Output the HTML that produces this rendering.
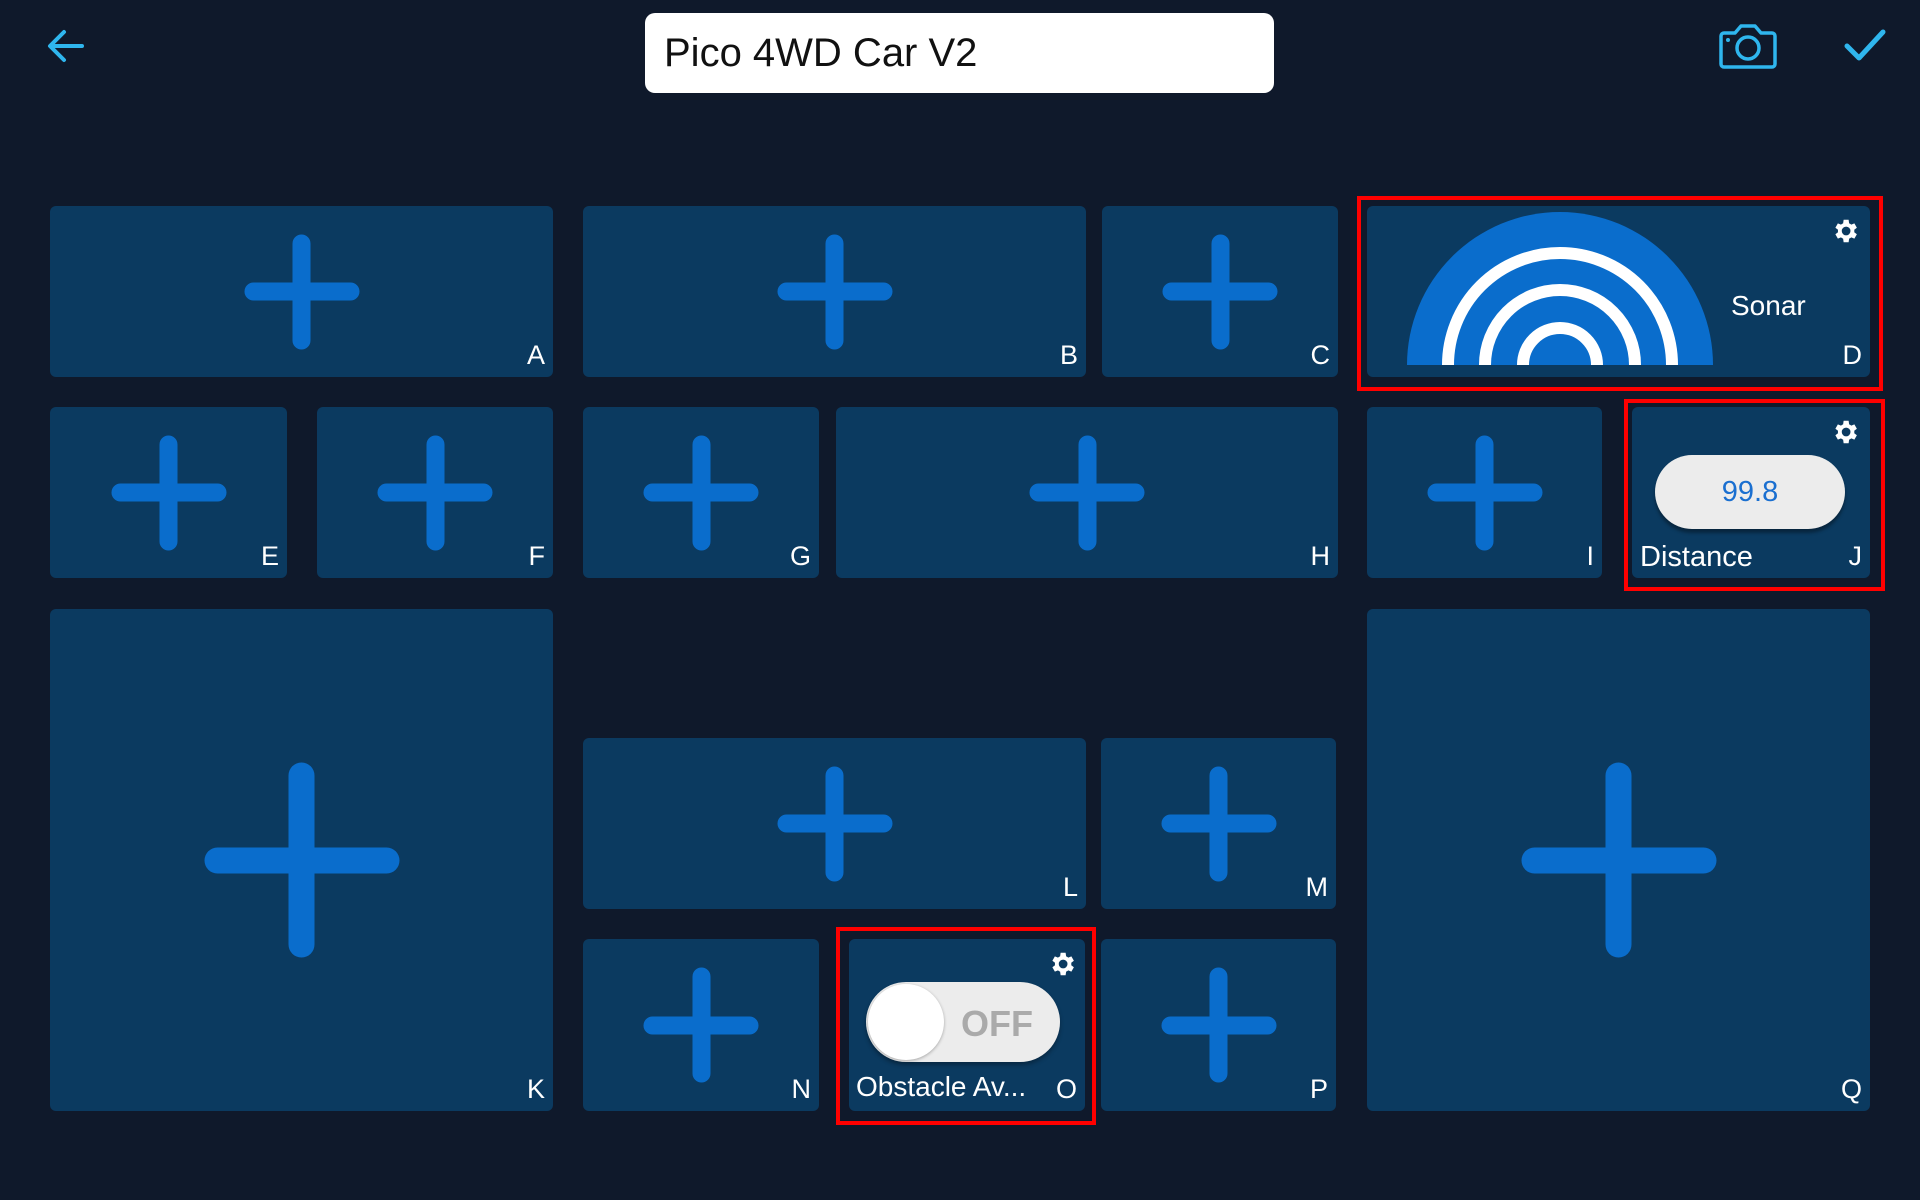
<!DOCTYPE html>
<html><head><meta charset="utf-8"><style>
body{margin:0;width:1920px;height:1200px;background:#0f192b;overflow:hidden;font-family:"Liberation Sans",sans-serif;position:relative}
.t{position:absolute;background:#0b3a60;border-radius:6px}
.p{position:absolute;left:50%;top:50%;transform:translate(-50%,-50%);width:115px;height:115px}
.p:before,.p:after{content:"";position:absolute;background:#0a6dcc;border-radius:9px}
.p:before{left:0;right:0;top:50%;height:18px;margin-top:-9px}
.p:after{top:0;bottom:0;left:50%;width:18px;margin-left:-9px}
.big{width:195px;height:195px}
.big:before{height:26px;margin-top:-13px;border-radius:13px}
.big:after{width:26px;margin-left:-13px;border-radius:13px}
.l{position:absolute;right:8px;bottom:8px;color:#fff;font-size:27px;line-height:1}
.r{position:absolute;border:4px solid #f00;box-sizing:border-box}
.g{position:absolute;width:30px;height:30px}
</style></head><body>
<svg style="position:absolute;left:47px;top:28px" width="38" height="36" viewBox="0 0 38 36"><path d="M35 18H4M17 4L3 18L17 32" fill="none" stroke="#2fb6ee" stroke-width="4" stroke-linecap="round" stroke-linejoin="round"/></svg>
<div style="position:absolute;left:645px;top:13px;width:629px;height:80px;background:#fff;border-radius:10px"><span style="position:absolute;left:19px;top:18px;font-size:40px;color:#111">Pico 4WD Car V2</span></div>
<svg style="position:absolute;left:1717px;top:22px" width="62" height="48" viewBox="0 0 62 48"><path d="M4 14a3 3 0 0 1 3-3h11l6-7h14l6 7h11a3 3 0 0 1 3 3v28a3 3 0 0 1-3 3H7a3 3 0 0 1-3-3z" fill="none" stroke="#2fb6ee" stroke-width="3.5" stroke-linejoin="round"/><circle cx="31" cy="26" r="11" fill="none" stroke="#2fb6ee" stroke-width="3.5"/><circle cx="11" cy="18" r="2" fill="#2fb6ee"/></svg>
<svg style="position:absolute;left:1843px;top:28px" width="44" height="36" viewBox="0 0 44 36"><path d="M4 18l12 12L40 4" fill="none" stroke="#2fb6ee" stroke-width="5" stroke-linecap="round" stroke-linejoin="round"/></svg>

<div class="t" style="left:50px;top:206px;width:503px;height:171px"><div class="p"></div><span class="l">A</span></div>
<div class="t" style="left:583px;top:206px;width:503px;height:171px"><div class="p"></div><span class="l">B</span></div>
<div class="t" style="left:1102px;top:206px;width:236px;height:171px"><div class="p"></div><span class="l">C</span></div>
<div class="t" style="left:1367px;top:206px;width:503px;height:171px">
<svg style="position:absolute;left:38px;top:1px" width="310" height="159" viewBox="0 0 310 159"><path d="M2 158A153 153 0 0 1 308 158Z" fill="#0a6dcc"/><g fill="none" stroke="#fff" stroke-width="12"><path d="M43 158A112 112 0 0 1 267 158"/><path d="M80 158A75 75 0 0 1 230 158"/><path d="M118 158A37 37 0 0 1 192 158"/></g></svg>
<span style="position:absolute;left:364px;top:84px;color:#fff;font-size:28px">Sonar</span>
<svg class="g" style="right:10px;top:10px" viewBox="0 0 24 24"><path fill="#fff" d="M19.4 13a7.5 7.5 0 0 0 0-2l2.1-1.6-2-3.5-2.5 1a7 7 0 0 0-1.7-1L14.9 3h-4l-.4 2.9a7 7 0 0 0-1.7 1l-2.5-1-2 3.5L6.4 11a7.5 7.5 0 0 0 0 2l-2.1 1.6 2 3.5 2.5-1a7 7 0 0 0 1.7 1l.4 2.9h4l.4-2.9a7 7 0 0 0 1.7-1l2.5 1 2-3.5zM12.9 15.5a3.5 3.5 0 1 1 0-7 3.5 3.5 0 0 1 0 7z"/></svg>
<span class="l">D</span></div>

<div class="t" style="left:50px;top:407px;width:237px;height:171px"><div class="p"></div><span class="l">E</span></div>
<div class="t" style="left:317px;top:407px;width:236px;height:171px"><div class="p"></div><span class="l">F</span></div>
<div class="t" style="left:583px;top:407px;width:236px;height:171px"><div class="p"></div><span class="l">G</span></div>
<div class="t" style="left:836px;top:407px;width:502px;height:171px"><div class="p"></div><span class="l">H</span></div>
<div class="t" style="left:1367px;top:407px;width:235px;height:171px"><div class="p"></div><span class="l">I</span></div>
<div class="t" style="left:1632px;top:407px;width:238px;height:171px">
<div style="position:absolute;left:23px;top:48px;width:190px;height:74px;border-radius:37px;background:#ececec;box-shadow:0 4px 3px rgba(0,0,0,.35);text-align:center;line-height:74px;font-size:29px;color:#1a6fd0">99.8</div>
<svg class="g" style="right:10px;top:10px" viewBox="0 0 24 24"><path fill="#fff" d="M19.4 13a7.5 7.5 0 0 0 0-2l2.1-1.6-2-3.5-2.5 1a7 7 0 0 0-1.7-1L14.9 3h-4l-.4 2.9a7 7 0 0 0-1.7 1l-2.5-1-2 3.5L6.4 11a7.5 7.5 0 0 0 0 2l-2.1 1.6 2 3.5 2.5-1a7 7 0 0 0 1.7 1l.4 2.9h4l.4-2.9a7 7 0 0 0 1.7-1l2.5 1 2-3.5zM12.9 15.5a3.5 3.5 0 1 1 0-7 3.5 3.5 0 0 1 0 7z"/></svg>
<span style="position:absolute;left:8px;bottom:4px;color:#fff;font-size:29px">Distance</span>
<span class="l">J</span></div>

<div class="t" style="left:50px;top:609px;width:503px;height:502px"><div class="p big"></div><span class="l">K</span></div>
<div class="t" style="left:583px;top:738px;width:503px;height:171px"><div class="p"></div><span class="l">L</span></div>
<div class="t" style="left:1101px;top:738px;width:235px;height:171px"><div class="p"></div><span class="l">M</span></div>
<div class="t" style="left:583px;top:939px;width:236px;height:172px"><div class="p"></div><span class="l">N</span></div>
<div class="t" style="left:849px;top:939px;width:236px;height:172px">
<div style="position:absolute;left:17px;top:43px;width:194px;height:80px;border-radius:40px;background:#ececec;box-shadow:0 3px 4px rgba(0,0,0,.3)"><div style="position:absolute;left:2px;top:2px;width:76px;height:76px;border-radius:38px;background:#fff;box-shadow:0 1px 3px rgba(0,0,0,.3)"></div><span style="position:absolute;left:95px;top:21px;font-size:36px;color:#aaa;font-weight:bold">OFF</span></div>
<svg class="g" style="right:8px;top:10px" viewBox="0 0 24 24"><path fill="#fff" d="M19.4 13a7.5 7.5 0 0 0 0-2l2.1-1.6-2-3.5-2.5 1a7 7 0 0 0-1.7-1L14.9 3h-4l-.4 2.9a7 7 0 0 0-1.7 1l-2.5-1-2 3.5L6.4 11a7.5 7.5 0 0 0 0 2l-2.1 1.6 2 3.5 2.5-1a7 7 0 0 0 1.7 1l.4 2.9h4l.4-2.9a7 7 0 0 0 1.7-1l2.5 1 2-3.5zM12.9 15.5a3.5 3.5 0 1 1 0-7 3.5 3.5 0 0 1 0 7z"/></svg>
<span style="position:absolute;left:7px;bottom:8px;color:#fff;font-size:28px">Obstacle Av...</span>
<span class="l">O</span></div>
<div class="t" style="left:1101px;top:939px;width:235px;height:172px"><div class="p"></div><span class="l">P</span></div>
<div class="t" style="left:1367px;top:609px;width:503px;height:502px"><div class="p big"></div><span class="l">Q</span></div>

<div class="r" style="left:1357px;top:196px;width:526px;height:195px"></div>
<div class="r" style="left:1624px;top:399px;width:261px;height:192px"></div>
<div class="r" style="left:836px;top:927px;width:260px;height:198px"></div>
</body></html>
